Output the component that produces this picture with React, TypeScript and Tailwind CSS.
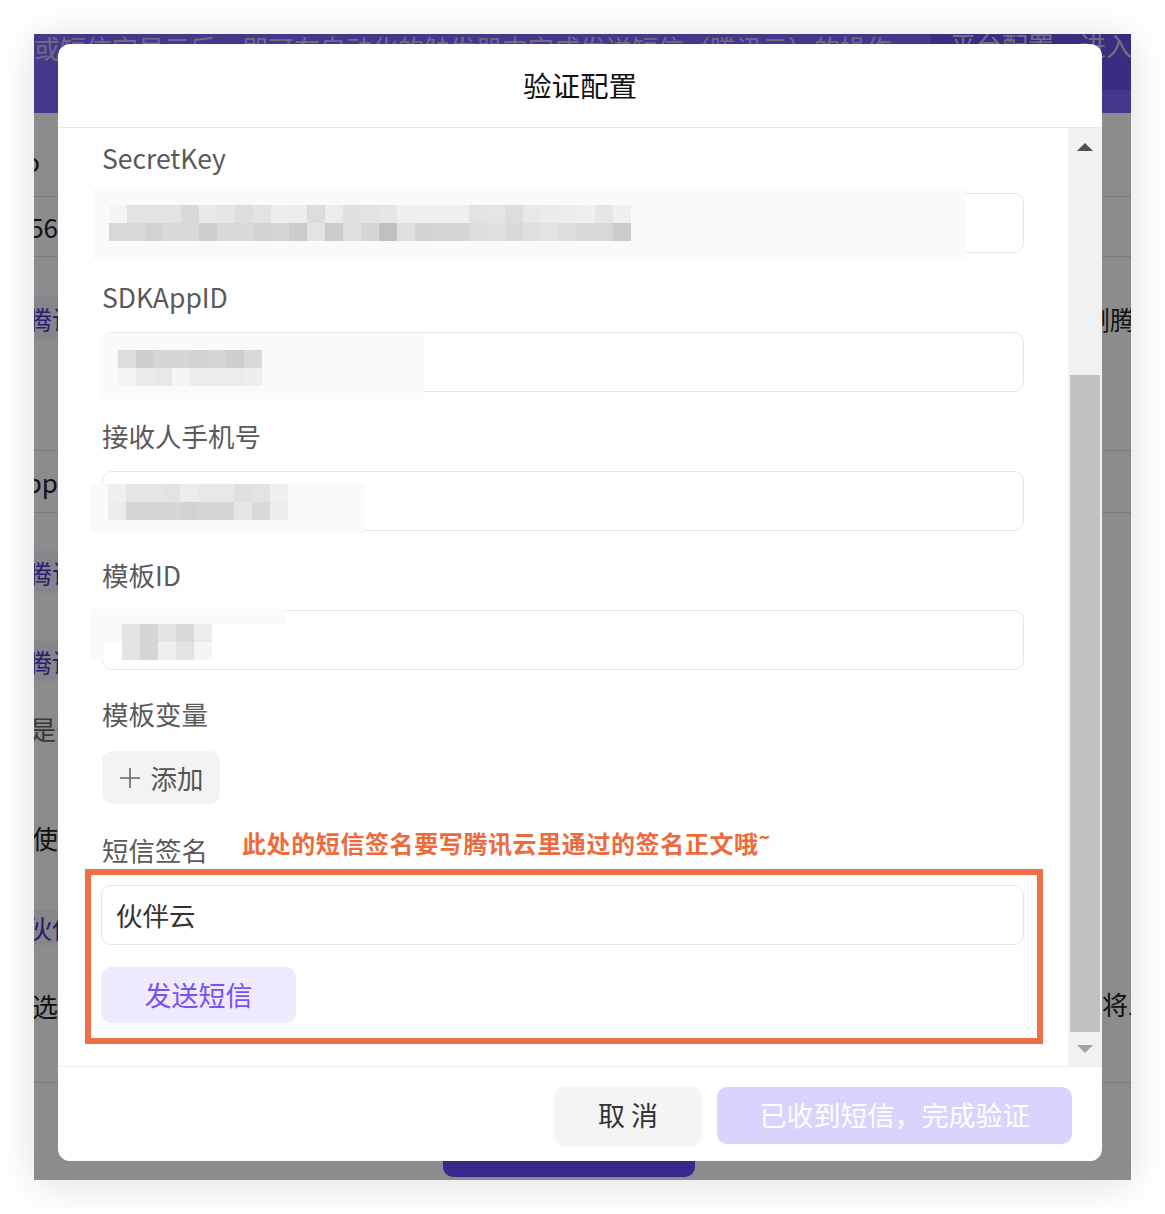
import React from 'react';

const g = (s: string) => s.split(' ');

const secretRows = [
  g('f5 e3 e3 e3 d9 e8 e5 dd e3 ee ec dc ec e0 e3 e6 f0 f0 f0 f0 e3 e5 dd e8 eb ec f0 e6 f0'),
  g('d9 d9 d3 d9 d9 cf d9 d9 d3 d6 cc e3 cc e0 d6 c0 e0 d3 d6 d6 dd e0 d9 e0 e3 dd d9 d9 cc'),
];
const appRows = [g('dd cf d6 d6 d3 d6 cf d9'), g('f5 eb e8 f5 ec ec ec ee')];
const phoneRows = [g('f0 e6 e6 e3 ec e8 e8 e0 e3 f0'), g('ec d6 d6 d6 d3 d6 d6 e6 d9 ec')];
const tplRows = [g('f8 e3 d6 e3 d9 ec'), g('ff e3 d6 f0 e3 f5')];

const Mosaic = ({ rows }: { rows: string[][] }) => (
  <div className="flex flex-col">
    {rows.map((r, i) => (
      <div key={i} className="flex">
        {r.map((c, j) => (
          <div key={j} className="w-[18px] h-[18px]" style={{ background: `#${c}${c}${c}` }} />
        ))}
      </div>
    ))}
  </div>
);

const Label = ({ children }: { children: React.ReactNode }) => (
  <div className="h-[40px] pb-[3px] flex items-center text-[26.5px] text-[#5a5a5a]">{children}</div>
);

const Input = ({ children }: { children?: React.ReactNode }) => (
  <div className="relative h-[60px] rounded-[10px] border border-[#e6e6e6] bg-white flex items-center px-[14px] text-[26.5px] text-[#333]">
    {children}
  </div>
);

export default function App() {
  return (
    <div className="w-[1165px] h-[1214px] bg-white p-[34px] font-['Noto_Sans_CJK_SC','Noto_Sans',sans-serif]">
      {/* screenshot frame */}
      <div className="relative w-full h-full overflow-hidden bg-white shadow-[0_4px_40px_rgba(0,0,0,0.13)]">
        {/* page behind the dialog */}
        <div className="flex flex-col h-full">
          <div className="h-[79px] bg-[#7f64fb] flex justify-between">
            <div className="leading-[28px] text-[26px] text-white/60 whitespace-nowrap">
              或短信完显示后，即可在自动化的触发器中完成发送短信（腾讯云）的操作
            </div>
            <div className="w-[201px] h-[56px] bg-[#6a50e8] rounded-bl-[24px] pl-[20px] leading-[22px] text-[26px] text-white/70 whitespace-nowrap overflow-hidden">
              平台配置，进入
            </div>
          </div>

          <div className="h-[84px] flex justify-between border-b border-[#e2e2e2] text-[26px] text-[#222]">
            <div className="w-[24px] overflow-hidden flex justify-end whitespace-nowrap pt-[28px] pr-[18px]">Info</div>
          </div>
          <div className="h-[60px] flex justify-between items-center border-b border-[#e2e2e2] text-[26px] text-[#222]">
            <div className="w-[24px] overflow-hidden flex justify-end whitespace-nowrap">123456</div>
          </div>
          <div className="h-[194px] flex justify-between items-start pt-[39px] border-b border-[#e2e2e2] text-[26px]">
            <div className="w-[24px] h-[44px] overflow-hidden flex items-center whitespace-nowrap bg-[#f4f2fd] text-[#4b36c9]">
              <span className="-ml-[8px]">腾讯云</span>
            </div>
            <div className="w-[41px] h-[44px] overflow-hidden flex items-center whitespace-nowrap text-[#222]">
              <span className="-ml-[6px]">删腾讯</span>
            </div>
          </div>
          <div className="h-[62px] flex justify-between items-center border-b border-[#e2e2e2] text-[26px] text-[#222]">
            <div className="w-[24px] overflow-hidden flex justify-end whitespace-nowrap">SDKApp</div>
          </div>
          <div className="h-[570px] flex justify-between items-start border-b border-[#e2e2e2] text-[26px]">
            <div className="w-[24px] flex flex-col overflow-hidden whitespace-nowrap">
              <div className="mt-[38px] h-[42px] flex items-center bg-[#f4f2fd] text-[#4b36c9]"><span className="-ml-[8px]">腾讯云</span></div>
              <div className="mt-[48px] h-[40px] flex items-center bg-[#f4f2fd] text-[#4b36c9]"><span className="-ml-[8px]">腾讯云</span></div>
              <div className="mt-[29px] h-[36px] flex items-center text-[#666]"><span className="-ml-[4px]">是否</span></div>
              <div className="mt-[73px] h-[36px] flex items-center text-[#222]"><span className="-ml-[2px]">使用</span></div>
              <div className="mt-[55px] h-[35px] flex items-center bg-[#f4f2fd] text-[#4b36c9]"><span className="-ml-[8px]">伙伴云</span></div>
              <div className="mt-[42px] h-[36px] flex items-center text-[#222]"><span className="-ml-[2px]">选择</span></div>
            </div>
            <div className="w-[41px] flex flex-col overflow-hidden whitespace-nowrap text-[#222]">
              <div className="mt-[472px] h-[36px] flex items-center"><span className="-ml-[14px]">删将发</span></div>
            </div>
          </div>
          <div className="flex-1 flex items-end pb-[3px] pl-[409px]">
            <div className="w-[252px] h-[50px] rounded-[10px] bg-[#694cff]" />
          </div>
        </div>

        {/* mask */}
        <div className="absolute inset-0 bg-black/45" />

        {/* dialog */}
        <div className="absolute left-[24px] top-[10px] w-[1044px] h-[1117px] rounded-[12px] bg-white overflow-hidden flex flex-col">
          <div className="h-[84px] shrink-0 flex items-center justify-center border-b border-[#e8e8e8] text-[28.5px] text-[#111]">
            验证配置
          </div>

          <div className="h-[938px] shrink-0 flex">
            <div className="flex-1 overflow-hidden px-[44px] pt-[11px]">
              <Label>SecretKey</Label>
              <div className="mt-[14px] mb-[25px]">
                <Input>
                  <div className="absolute -left-[10px] -top-[5px] w-[873px] h-[70px] bg-[#fafafa]" />
                  <div className="absolute left-[6px] top-[11px]"><Mosaic rows={secretRows} /></div>
                </Input>
              </div>

              <Label>SDKAppID</Label>
              <div className="mt-[14px] mb-[25px]">
                <Input>
                  <div className="absolute -left-[3px] top-[2px] w-[324px] h-[64px] bg-[#fafafa]" />
                  <div className="absolute left-[15px] top-[17px]"><Mosaic rows={appRows} /></div>
                </Input>
              </div>

              <Label>接收人手机号</Label>
              <div className="mt-[14px] mb-[25px]">
                <Input>
                  <div className="absolute -left-[12px] top-[11px] w-[273px] h-[50px] bg-[#fafafa]" />
                  <div className="absolute left-[5px] top-[12px]"><Mosaic rows={phoneRows} /></div>
                </Input>
              </div>

              <Label>模板ID</Label>
              <div className="mt-[14px] mb-[25px]">
                <Input>
                  <div className="absolute -left-[12px] -top-[2px] w-[195px] h-[16px] bg-[#fafafa]" />
                  <div className="absolute -left-[12px] top-[13px] w-[13px] h-[36px] bg-[#fafafa]" />
                  <div className="absolute left-[1px] top-[13px]"><Mosaic rows={tplRows} /></div>
                </Input>
              </div>

              <Label>模板变量</Label>
              <div className="mt-[16px] mb-[26px] w-[118px] h-[53px] rounded-[10px] bg-[#f3f3f3] flex items-center justify-center gap-[10px] text-[26.5px] text-[#555]">
                <svg width="22" height="22" viewBox="0 0 22 22" fill="none" stroke="#666" strokeWidth="1.6">
                  <path d="M11 1v20M1 11h20" />
                </svg>
                <span>添加</span>
              </div>

              <div className="h-[40px] flex items-center">
                <span className="text-[26.5px] text-[#5a5a5a]">短信签名</span>
                <span className="ml-[34px] mb-[14px] text-[24px] font-bold tracking-[0.6px] text-[#ee6a3c] whitespace-nowrap">
                  此处的短信签名要写腾讯云里通过的签名正文哦˜
                </span>
              </div>

              <div className="-ml-[17px] -mr-[19px] -mt-[1px] border-[6px] border-[#ef7046] pl-[10px] pr-[13px] pt-[10px] pb-[15px]">
                <Input>伙伴云</Input>
                <div className="mt-[22px] w-[195px] h-[56px] rounded-[10px] bg-[#f0eafe] flex items-center justify-center text-[27px] text-[#7452f5]">
                  发送短信
                </div>
              </div>
            </div>

            {/* scrollbar */}
            <div className="w-[34px] bg-[#f1f1f1] flex flex-col">
              <div className="h-[37px] flex items-center justify-center">
                <div className="w-0 h-0 border-l-[8px] border-r-[8px] border-b-[8px] border-l-transparent border-r-transparent border-b-[#505050]" />
              </div>
              <div className="h-[210px]" />
              <div className="h-[657px] mx-[2px] bg-[#c1c1c1]" />
              <div className="flex-1 flex items-center justify-center">
                <div className="w-0 h-0 border-l-[8px] border-r-[8px] border-t-[8px] border-l-transparent border-r-transparent border-t-[#a3a3a3]" />
              </div>
            </div>
          </div>

          <div className="flex-1 flex justify-end items-start gap-[16px] pt-[20px] pr-[30px] border-t border-[#ececec]">
            <div className="w-[146px] h-[57px] rounded-[10px] bg-[#f4f4f4] shadow-[0_2px_4px_rgba(0,0,0,0.06)] flex items-center justify-center text-[27px] text-[#333]">
              取 消
            </div>
            <div className="w-[355px] h-[57px] rounded-[10px] bg-[#d9d3fd] flex items-center justify-center text-[27px] text-white">
              已收到短信，完成验证
            </div>
          </div>
        </div>
      </div>
    </div>
  );
}
